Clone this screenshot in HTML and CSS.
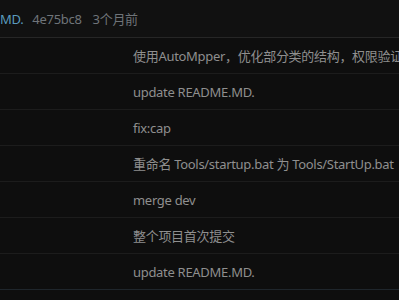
FILE: index.html
```html
<!DOCTYPE html>
<html lang="zh-CN">
<head>
  <meta charset="UTF-8">
  <title>提交记录</title>
  <link rel="stylesheet" href="styles.css">
</head>
<body>

<div class="head">
  <a class="head-msg" href="#">MD.</a>
  <span class="sha">4e75bc8</span>
  <span class="when">3个月前</span>
</div>

<div class="rows">
  <div class="row"><span class="name"></span><span class="msg">使用AutoMpper，优化部分类的结构，权限验证逻辑调整</span></div>
  <div class="row"><span class="name"></span><span class="msg">update README.MD.</span></div>
  <div class="row"><span class="name"></span><span class="msg">fix:cap</span></div>
  <div class="row"><span class="name"></span><span class="msg">重命名 Tools/startup.bat 为 Tools/StartUp.bat</span></div>
  <div class="row"><span class="name"></span><span class="msg">merge dev</span></div>
  <div class="row"><span class="name"></span><span class="msg">整个项目首次提交</span></div>
  <div class="row last"><span class="name"></span><span class="msg">update README.MD.</span></div>
</div>

</body>
</html>
```

FILE: styles.css
```css
body {
  margin: 0;
  background: #0e0e0e;
  color: #8a8a8a;
  font-family: "Noto Sans", "Noto Sans CJK SC", sans-serif;
  font-size: 13px;
  letter-spacing: -0.3px;
  width: 399px;
  height: 300px;
  overflow: hidden;
}
.head {
  height: 37px;
  display: flex;
  align-items: center;
  gap: 9px;
  background: #111111;
  border-bottom: 1px solid #262626;
  color: #6f7479;
  white-space: nowrap;
}
.head-msg {
  color: #5a9bbd;
  text-decoration: none;
}
.when {
  margin-left: 2px;
}
.rows {
  display: flex;
  flex-direction: column;
}
.row {
  height: 35px;
  display: flex;
  align-items: center;
  border-bottom: 1px solid #1c1c1c;
  white-space: nowrap;
  overflow: hidden;
}
.row.last {
  border-bottom-color: #1f262c;
}
.name {
  width: 133px;
  flex-shrink: 0;
}
.msg {
  color: #8f8f8f;
}
```
